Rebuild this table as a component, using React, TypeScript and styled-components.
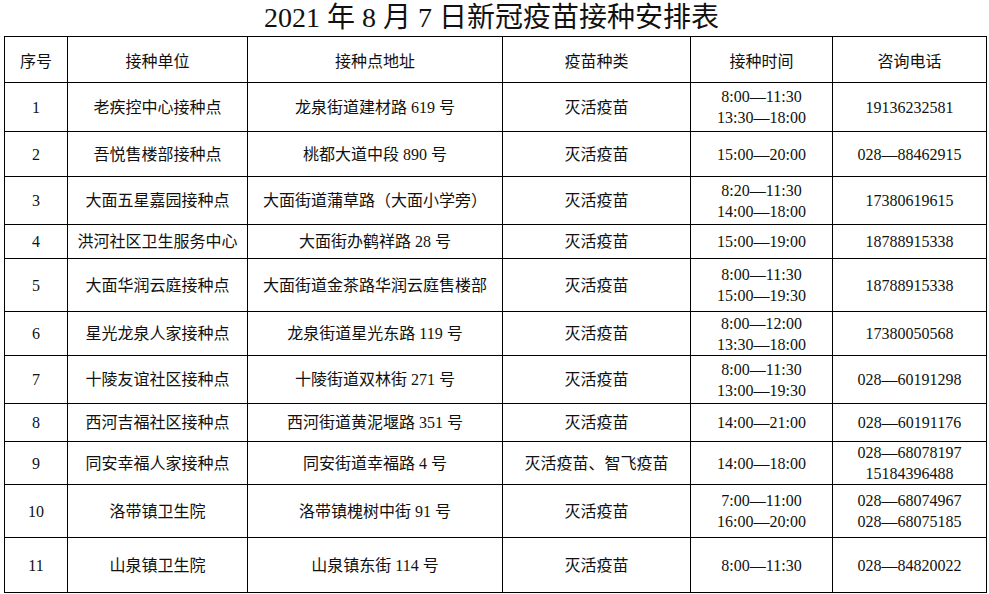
import React from 'react';
import styled, { createGlobalStyle } from 'styled-components';

const GlobalStyle = createGlobalStyle`
    html, body {
        margin: 0;
        padding: 0;
        background: #fff;
    }
    body {
        font-family: "Liberation Serif", "Noto Sans CJK SC", serif;
        color: #111;
    }
`

type Row = {
    no: string;
    unit: string;
    address: string;
    vaccine: string;
    times: string[];
    phones: string[];
    height: number;
}

const rows: Row[] = [
    { no: '1', unit: '老疾控中心接种点', address: '龙泉街道建材路 619 号', vaccine: '灭活疫苗', times: ['8:00—11:30', '13:30—18:00'], phones: ['19136232581'], height: 49 },
    { no: '2', unit: '吾悦售楼部接种点', address: '桃都大道中段 890 号', vaccine: '灭活疫苗', times: ['15:00—20:00'], phones: ['028—88462915'], height: 45 },
    { no: '3', unit: '大面五星嘉园接种点', address: '大面街道蒲草路（大面小学旁）', vaccine: '灭活疫苗', times: ['8:20—11:30', '14:00—18:00'], phones: ['17380619615'], height: 48 },
    { no: '4', unit: '洪河社区卫生服务中心', address: '大面街办鹤祥路 28 号', vaccine: '灭活疫苗', times: ['15:00—19:00'], phones: ['18788915338'], height: 34 },
    { no: '5', unit: '大面华润云庭接种点', address: '大面街道金茶路华润云庭售楼部', vaccine: '灭活疫苗', times: ['8:00—11:30', '15:00—19:30'], phones: ['18788915338'], height: 53 },
    { no: '6', unit: '星光龙泉人家接种点', address: '龙泉街道星光东路 119 号', vaccine: '灭活疫苗', times: ['8:00—12:00', '13:30—18:00'], phones: ['17380050568'], height: 44 },
    { no: '7', unit: '十陵友谊社区接种点', address: '十陵街道双林街 271 号', vaccine: '灭活疫苗', times: ['8:00—11:30', '13:00—19:30'], phones: ['028—60191298'], height: 48 },
    { no: '8', unit: '西河吉福社区接种点', address: '西河街道黄泥堰路 351 号', vaccine: '灭活疫苗', times: ['14:00—21:00'], phones: ['028—60191176'], height: 38 },
    { no: '9', unit: '同安幸福人家接种点', address: '同安街道幸福路 4 号', vaccine: '灭活疫苗、智飞疫苗', times: ['14:00—18:00'], phones: ['028—68078197', '15184396488'], height: 41 },
    { no: '10', unit: '洛带镇卫生院', address: '洛带镇槐树中街 91 号', vaccine: '灭活疫苗', times: ['7:00—11:00', '16:00—20:00'], phones: ['028—68074967', '028—68075185'], height: 53 },
    { no: '11', unit: '山泉镇卫生院', address: '山泉镇东街 114 号', vaccine: '灭活疫苗', times: ['8:00—11:30'], phones: ['028—84820022'], height: 55 },
]

const headers = ['序号', '接种单位', '接种点地址', '疫苗种类', '接种时间', '咨询电话']
const widths = [63, 180, 255, 188, 142, 154]

export default function App() {
    return (
        <>
            <GlobalStyle />
            <Page>
                <Title>2021 年 8 月 7 日新冠疫苗接种安排表</Title>
                <Table>
                    <colgroup>
                        {widths.map((w, i) => <col key={i} style={{ width: w }} />)}
                    </colgroup>
                    <thead>
                        <Tr height={46}>
                            {headers.map(h => <Th key={h}>{h}</Th>)}
                        </Tr>
                    </thead>
                    <tbody>
                        {rows.map(r => (
                            <Tr key={r.no} height={r.height}>
                                <Td>{r.no}</Td>
                                <Td>{r.unit}</Td>
                                <Td>{r.address}</Td>
                                <Td>{r.vaccine}</Td>
                                <Td>
                                    {r.times.map(t => <Line key={t}>{t}</Line>)}
                                </Td>
                                <Td>
                                    {r.phones.map(p => <Line key={p}>{p}</Line>)}
                                </Td>
                            </Tr>
                        ))}
                    </tbody>
                </Table>
            </Page>
        </>
    )
}

const Page = styled.div`
    width: 989px;
    height: 594px;
    overflow: hidden;
`

const Title = styled.h1`
    margin: 0;
    height: 36px;
    line-height: 36px;
    font-size: 28px;
    font-weight: normal;
    text-align: center;
    padding-right: 6px;
    color: #111;
`

const Table = styled.table`
    margin-left: 4px;
    width: 982px;
    border-collapse: collapse;
    table-layout: fixed;
`

const Tr = styled.tr<{ height: number }>`
    height: ${props => props.height}px;
`

const Th = styled.th`
    border: 1px solid #000;
    padding: 0;
    font-size: 16px;
    font-weight: normal;
    text-align: center;
    vertical-align: middle;
`

const Td = styled.td`
    border: 1px solid #000;
    padding: 0;
    font-size: 16px;
    line-height: 21px;
    text-align: center;
    vertical-align: middle;
    white-space: nowrap;
`

const Line = styled.div`
    line-height: 21px;
`
